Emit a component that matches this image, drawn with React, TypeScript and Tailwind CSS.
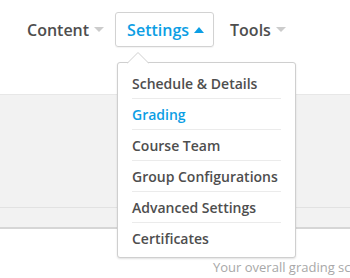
import React from 'react'

const items = ['Schedule & Details', 'Grading', 'Course Team', 'Group Configurations', 'Advanced Settings', 'Certificates']

function Chevron({ up, color }: { up?: boolean; color: string }) {
    return (
        <svg width="10" height="6" viewBox="0 0 10 6" className="ml-[5px]">
            {up ? <path d="M0 6 L5 0 L10 6 Z" fill={color} /> : <path d="M0 0 L10 0 L5 5 Z" fill={color} />}
        </svg>
    )
}

export default function App() {
    return (
        <div className="relative w-[350px] h-[278px] overflow-hidden bg-white" style={{ fontFamily: '"Open Sans", sans-serif' }}>
            <nav className="flex items-center pt-[12px] pl-[15px] text-[16px] font-semibold">
                <div className="flex items-center h-[35px] pl-[12px] pr-[9px] text-[#4e4e4e]">
                    Content <Chevron color="#cccccc" />
                </div>
                <div className="flex items-center h-[35px] ml-[2px] pl-[11px] pr-[9px] border border-[#d2d2d2] rounded-[3px] text-[#0c9ee4] shadow-[0_1px_1px_rgba(0,0,0,0.05)]">
                    Settings <Chevron up color="#0c9ee4" />
                </div>
                <div className="flex items-center h-[35px] ml-[4px] px-[12px] text-[#4e4e4e]">
                    Tools <Chevron color="#cccccc" />
                </div>
            </nav>

            <div className="mt-[47px] h-[135px] bg-[#f2f2f2] border-t border-[#e7e7e7] border-b-2 border-b-[#d6d6d6] flex flex-col justify-end">
                <div className="h-[20px] border-t border-[#e2e2e2]" />
            </div>

            <p className="mt-[29px] pl-[213px] whitespace-nowrap text-[13px] text-[#a8a8a8]">Your overall grading scale</p>

            <div className="absolute left-[117px] top-[62px] w-[179px] h-[196px] bg-white border border-[#cfcfcf] rounded-[3px] shadow-[0_1px_2px_rgba(0,0,0,0.12)] px-[14px] pt-[5px]">
                <svg width="22" height="12" viewBox="0 0 22 12" className="absolute left-[9px] -top-[11px]">
                    <path d="M0 11.5 L11 0.5 L22 11.5" fill="white" stroke="#cfcfcf" strokeWidth="1" />
                </svg>
                {items.map((item, i) => (
                    <div
                        key={item}
                        className={`h-[31px] flex items-center text-[14px] font-semibold ${i < items.length - 1 ? 'border-b border-[#ebebeb]' : ''} ${item === 'Grading' ? 'text-[#0c9ee4]' : 'text-[#4e4e4e]'}`}
                    >
                        {item}
                    </div>
                ))}
            </div>
        </div>
    )
}
